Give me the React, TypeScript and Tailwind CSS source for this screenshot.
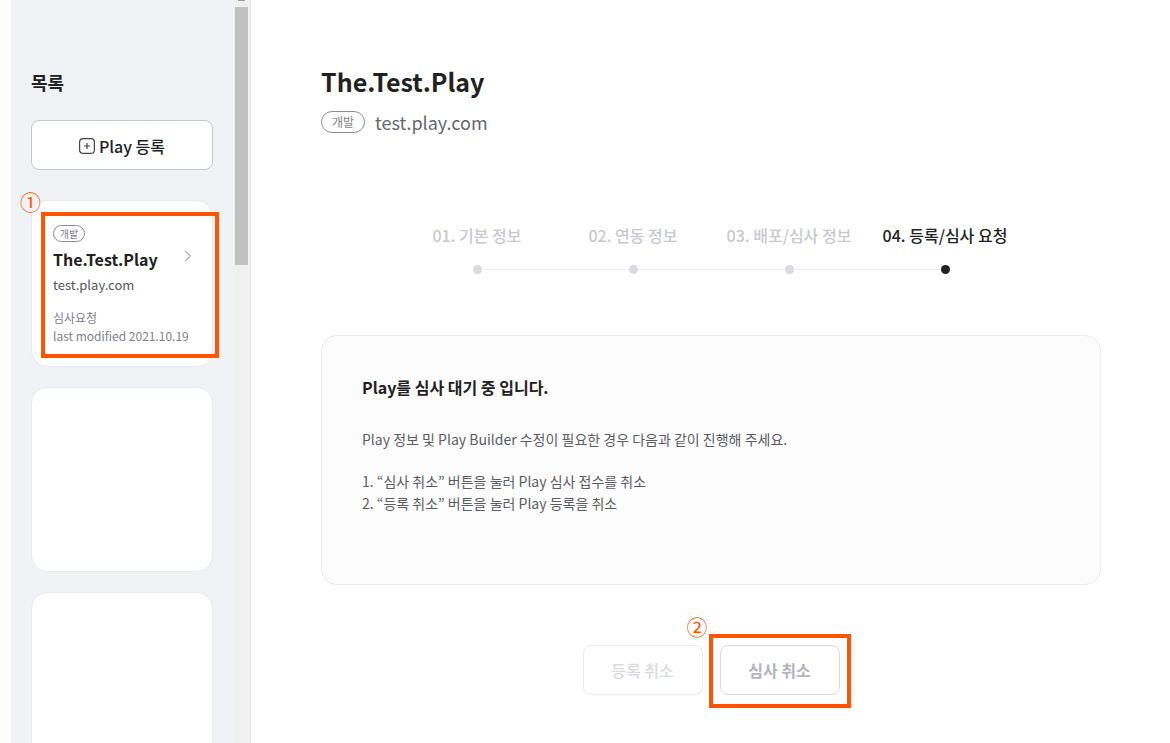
import React from 'react';

interface Play {
  id: number;
  stage: string;
  name: string;
  domain: string;
  status: string;
  modified: string;
}

interface Step {
  id: string;
  label: string;
}

const play: Play = {
  id: 1,
  stage: '개발',
  name: 'The.Test.Play',
  domain: 'test.play.com',
  status: '심사요청',
  modified: 'last modified 2021.10.19',
};

const steps: Step[] = [
  { id: '01', label: '기본 정보' },
  { id: '02', label: '연동 정보' },
  { id: '03', label: '배포/심사 정보' },
  { id: '04', label: '등록/심사 요청' },
];

const currentStep = '04';

const PlusBoxIcon: React.FC = () => (
  <svg width="16" height="16" viewBox="0 0 16 16" fill="none" stroke="#444" aria-hidden="true">
    <rect x="0.6" y="0.6" width="14.8" height="14.8" rx="3.5" strokeWidth="1.2" />
    <path d="M8 5v6M5 8h6" strokeWidth="1.2" />
  </svg>
);

const ChevronIcon: React.FC = () => (
  <svg
    className="mt-[25px]"
    width="8"
    height="12"
    viewBox="0 0 8 12"
    fill="none"
    stroke="#a3a4ab"
    aria-hidden="true"
  >
    <path d="M1 0.8L6.5 6L1 11.2" strokeWidth="1.1" />
  </svg>
);

interface MarkerProps {
  className: string;
  children: React.ReactNode;
}

const Marker: React.FC<MarkerProps> = ({ className, children }) => (
  <span className={`pointer-events-none absolute text-[21px] leading-8 text-[#ff5500] ${className}`}>
    {children}
  </span>
);

const Sidebar: React.FC = () => {
  return (
    <aside className="flex h-screen shrink-0 overflow-hidden border-r border-[#e8e8ea] bg-[#f1f2f6]">
      <div className="w-[11px] bg-[#fcfcfc]" />
      <div className="w-[222px] px-5 pt-[70px]">
        <h2 className="text-lg leading-6 font-bold">목록</h2>
        <button
          type="button"
          className="mt-[26px] flex h-[50px] w-[182px] items-center justify-center gap-1 rounded-lg border border-[#c5c6d0] bg-white pt-[2px] text-base font-medium"
        >
          <PlusBoxIcon />
          Play 등록
        </button>

        {/* Play cards */}
        <ul className="mt-[30px] flex w-[182px] flex-col gap-5">
          <li className="relative h-[167px] rounded-2xl border border-[#e9eaef] bg-white">
            <a href="#play" className="flex items-start justify-between pt-6 pr-5 pl-[21px]">
              <span className="flex flex-col whitespace-nowrap">
                <span className="flex h-[17px] w-8 items-center justify-center rounded-full border border-[#8c8d96] text-[10px] text-[#808188]">
                  {play.stage}
                </span>
                <strong className="mt-[5px] text-base leading-6 font-bold">{play.name}</strong>
                <span className="mt-1 text-[13px] leading-5 text-[#55565c]">{play.domain}</span>
              </span>
              <ChevronIcon />
            </a>
            <div className="mt-[14px] pl-[21px] text-xs leading-[18px] whitespace-nowrap text-[#808188]">
              <p>{play.status}</p>
              <p>{play.modified}</p>
            </div>
            <Marker className="-top-4 -left-3">①</Marker>
            <div className="pointer-events-none absolute top-[11px] left-[9px] h-[146px] w-[178px] border-4 border-[#ff5500]" />
          </li>
          <li className="h-[185px] rounded-2xl border border-[#e9eaef] bg-white" />
          <li className="h-[185px] rounded-2xl border border-[#e9eaef] bg-white" />
        </ul>
      </div>

      {/* Scrollbar */}
      <div className="flex w-[17px] flex-col items-center bg-[#f0f0f0]">
        <div className="h-px w-[7px] bg-[#a0a0a0]" />
        <div className="mt-[6px] h-[258px] w-[13px] bg-[#c1c1c1]" />
      </div>
    </aside>
  );
};

const App: React.FC = () => {
  return (
    <div className="flex min-h-screen bg-white font-['Noto_Sans_CJK_KR',sans-serif] text-[#222]">
      <Sidebar />

      <main className="min-w-0 flex-1 pt-[63px] pr-[69px] pb-9 pl-[70px]">
        {/* Header */}
        <h1 className="text-[25px] leading-9 font-bold">{play.name}</h1>
        <div className="mt-[9px] flex items-center gap-[10px]">
          <span className="flex h-[22px] w-11 items-center justify-center rounded-full border border-[#8c8d96] text-xs text-[#808188]">
            {play.stage}
          </span>
          <span className="text-lg leading-7 text-[#66676d]">{play.domain}</span>
        </div>

        {/* Steps */}
        <ol className="mx-auto mt-[87px] grid max-w-[624px] grid-cols-4">
          {steps.map((step, index) => {
            const active = step.id === currentStep;
            return (
              <li key={step.id} className="flex flex-col items-center">
                <span
                  className={`text-base leading-6 font-medium whitespace-nowrap ${active ? 'text-[#222]' : 'text-[#c8c9d0]'}`}
                >
                  {step.id}. {step.label}
                </span>
                <span className="mt-[18px] flex w-full items-center">
                  <span className={`h-px flex-1 ${index > 0 ? 'bg-[#ebecf2]' : ''}`} />
                  <span className={`size-[9px] rounded-full ${active ? 'bg-[#222]' : 'bg-[#d9dae2]'}`} />
                  <span className={`h-px flex-1 ${index < steps.length - 1 ? 'bg-[#ebecf2]' : ''}`} />
                </span>
              </li>
            );
          })}
        </ol>

        {/* Status */}
        <section className="mt-[61px] min-h-[250px] rounded-2xl border border-[#ebebed] bg-[#fcfcfc] px-10 py-[39px]">
          <h3 className="text-base leading-6 font-bold">Play를 심사 대기 중 입니다.</h3>
          <p className="mt-[29px] text-sm leading-[22px] text-[#5c5d63]">
            Play 정보 및 Play Builder 수정이 필요한 경우 다음과 같이 진행해 주세요.
          </p>
          <ol className="mt-5 text-sm leading-[22px] text-[#5c5d63]">
            <li>1. “심사 취소” 버튼을 눌러 Play 심사 접수를 취소</li>
            <li>2. “등록 취소” 버튼을 눌러 Play 등록을 취소</li>
          </ol>
        </section>

        {/* Actions */}
        <div className="mt-[60px] flex justify-center gap-[17px]">
          <button
            type="button"
            disabled
            className="h-[50px] w-[120px] rounded-lg border border-[#ececf0] text-base font-medium text-[#d9dae0]"
          >
            등록 취소
          </button>
          <div className="relative">
            <button
              type="button"
              className="h-[50px] w-[120px] rounded-lg border border-[#d9dae2] text-base font-bold text-[#b3b4bb]"
            >
              심사 취소
            </button>
            <Marker className="-top-[35px] -left-[33px]">②</Marker>
            <div className="pointer-events-none absolute -top-[11px] -left-[11px] h-[74px] w-[142px] border-4 border-[#ff5500]" />
          </div>
        </div>
      </main>
    </div>
  );
};

export default App;
